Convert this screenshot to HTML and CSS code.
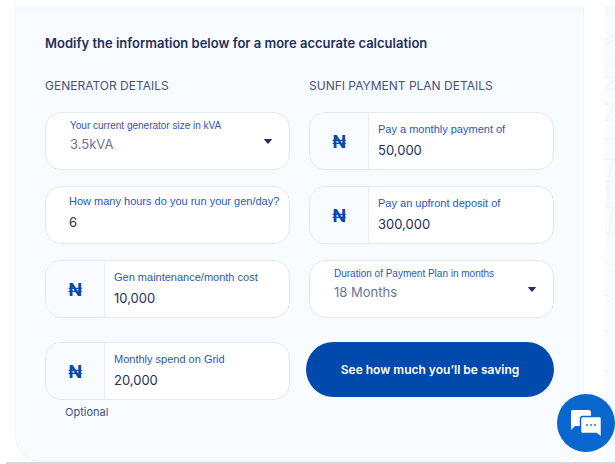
FILE: index.html
```html
<!DOCTYPE html>
<html lang="en">
<head>
<meta charset="UTF-8">
<meta name="viewport" content="width=device-width, initial-scale=1.0">
<title>SunFi Savings Calculator</title>
<link rel="stylesheet" href="styles.css">
</head>
<body>
    <div class="page">
        <form class="card">
            <h2>Modify the information below for a more accurate calculation</h2>
            <div class="columns">
                <div class="column">
                    <h3>GENERATOR DETAILS</h3>
                    <div class="field">
                        <div class="field-body select-body">
                            <label for="gen-size">Your current generator size in kVA</label>
                            <select id="gen-size">
                                <option>3.5kVA</option>
                                <option>5kVA</option>
                                <option>7.5kVA</option>
                            </select>
                        </div>
                        <svg class="arrow" viewBox="0 0 8 5"><path d="M0.5 0h7Q8.200 0 7.700 0.800L4.500 4.600Q4 5 3.500 4.600L0.300 0.800Q-0.200 0 0.500 0z"/></svg>
                    </div>
                    <div class="field">
                        <div class="field-body hours-body">
                            <label for="hours">How many hours do you run your gen/day?</label>
                            <input type="text" id="hours" value="6">
                        </div>
                    </div>
                    <div class="field">
                        <span class="naira">₦</span>
                        <div class="field-body">
                            <label for="maintenance">Gen maintenance/month cost</label>
                            <input type="text" id="maintenance" value="10,000">
                        </div>
                    </div>
                    <div class="field last">
                        <span class="naira">₦</span>
                        <div class="field-body">
                            <label for="grid">Monthly spend on Grid</label>
                            <input type="text" id="grid" value="20,000">
                        </div>
                    </div>
                    <p class="hint">Optional</p>
                </div>
                <div class="column">
                    <h3>SUNFI PAYMENT PLAN DETAILS</h3>
                    <div class="field">
                        <span class="naira">₦</span>
                        <div class="field-body">
                            <label for="monthly">Pay a monthly payment of</label>
                            <input type="text" id="monthly" value="50,000">
                        </div>
                    </div>
                    <div class="field">
                        <span class="naira">₦</span>
                        <div class="field-body">
                            <label for="deposit">Pay an upfront deposit of</label>
                            <input type="text" id="deposit" value="300,000">
                        </div>
                    </div>
                    <div class="field">
                        <div class="field-body select-body">
                            <label for="duration">Duration of Payment Plan in months</label>
                            <select id="duration">
                                <option>18 Months</option>
                                <option>12 Months</option>
                                <option>6 Months</option>
                            </select>
                        </div>
                        <svg class="arrow" viewBox="0 0 8 5"><path d="M0.5 0h7Q8.200 0 7.700 0.800L4.500 4.600Q4 5 3.500 4.600L0.300 0.800Q-0.200 0 0.500 0z"/></svg>
                    </div>
                    <button type="button" class="submit">See how much you’ll be saving</button>
                </div>
            </div>
        </form>
        <div class="side">
            <svg width="10" height="455" fill="none" stroke="#edf3f8">
                <path d="M0 34L10 28M0 39L10 33M0 46L10 42M0 53L10 50M0 60L10 58M0 71h10M0 83h10M0 98h10M0 114h10M0 133h10M0 153l10 1M0 175l10 2M0 200l10 3M0 226l10 4M0 256l10 5M0 289l10 5M0 324l10 6M0 364l10 6"/>
                <path d="M2 82L10 72M2 112L10 98M2 184Q4 165 9 154M3 176v24M7 205l-4 30"/>
            </svg>
        </div>
    </div>
    <button type="button" class="chat" aria-label="Chat">
        <svg viewBox="0 0 32 28" width="32" height="28">
            <path fill="#fff" d="M2.500 1h16Q21 1 21 3.500V15Q21 17 19 17H5L1 21V3Q1 1 2.500 1z"/>
            <path fill="#fff" stroke="#0866cf" stroke-width="1.500" d="M12.500 7.500h17q2 0 2 2v19l-5-4h-14q-2 0-2-2v-13q0-2 2-2z"/>
            <g fill="#0866cf"><circle cx="17" cy="16" r="0.900"/><circle cx="21" cy="16" r="0.900"/><circle cx="25" cy="16" r="0.900"/></g>
        </svg>
    </button>
</body>
</html>
```
FILE: styles.css
```css
*{
box-sizing: border-box;
}

body{
margin: 0;
background: white;
font-family: Inter, "Liberation Sans", sans-serif;
color: #24305a;
}

.page{
display: flex;
gap: 21px;
margin-left: 6px;
padding: 6px 0 0 9px;
border-bottom: 2px solid #d6d8de;
}

.card{
flex: 1;
padding: 27px 29px 41px;
border: 1px solid #f0f5fa;
border-top: none;
border-radius: 0 0 26px 26px;
background: linear-gradient(#f2f8fc, #f8fbff 12px);
}

.side{
width: 10px;
background: linear-gradient(#f2f8fc, #f8fbff 12px);
}

.side svg{
display: block;
}

h2{
margin: 0 0 25px;
font-size: 13px;
line-height: 20px;
font-weight: 600;
}

h3{
margin: 0 0 18px;
font-size: 12px;
line-height: 16px;
font-weight: 400;
color: #47527a;
white-space: nowrap;
}

.columns{
display: grid;
grid-template-columns: 1fr 1fr;
gap: 19px;
}

.column{
min-width: 0;
}

.field{
display: flex;
height: 58px;
margin-bottom: 16px;
border: 1px solid #e4e8ef;
border-radius: 16px;
background: white;
overflow: hidden;
}

.naira{
display: flex;
align-items: center;
justify-content: center;
width: 59px;
border-right: 1px solid #e9edf3;
background: #f8fbff;
color: #0549b0;
font-size: 18px;
font-weight: 700;
}

.field-body{
flex: 1;
min-width: 0;
padding: 8px 0 0 9px;
}

label{
display: block;
font-family: "Liberation Sans", sans-serif;
font-size: 11px;
line-height: 16px;
color: #2c57b5;
white-space: nowrap;
}

input, select{
display: block;
width: 100%;
height: 20px;
margin: 3px 0 0;
padding: 0;
border: none;
outline: none;
background: none;
appearance: none;
font-family: inherit;
font-size: 13px;
color: #24305a;
}

.hours-body{
padding: 6px 0 0 23px;
}

.select-body{
padding: 5px 0 0 24px;
}

.select-body label{
font-size: 10px;
}

select{
margin: 0;
color: #6b7696;
}

.arrow{
width: 8px;
height: 5px;
margin: 26px 17px 0 0;
fill: #24305a;
}

.last{
margin: 24px 0 4px;
}

.hint{
margin: 0 0 0 20px;
font-size: 11px;
line-height: 16px;
color: #47527a;
}

.submit{
display: block;
width: calc(100% + 3px);
height: 55px;
margin: 24px 0 0 -3px;
border: none;
border-radius: 28px;
background: #004aad;
color: white;
font-family: inherit;
font-size: 12px;
font-weight: 600;
}

.chat{
position: fixed;
right: 0;
bottom: 12px;
display: flex;
align-items: center;
justify-content: center;
width: 58px;
height: 58px;
padding: 0;
border: none;
border-radius: 50%;
background: #0866cf;
}
```
